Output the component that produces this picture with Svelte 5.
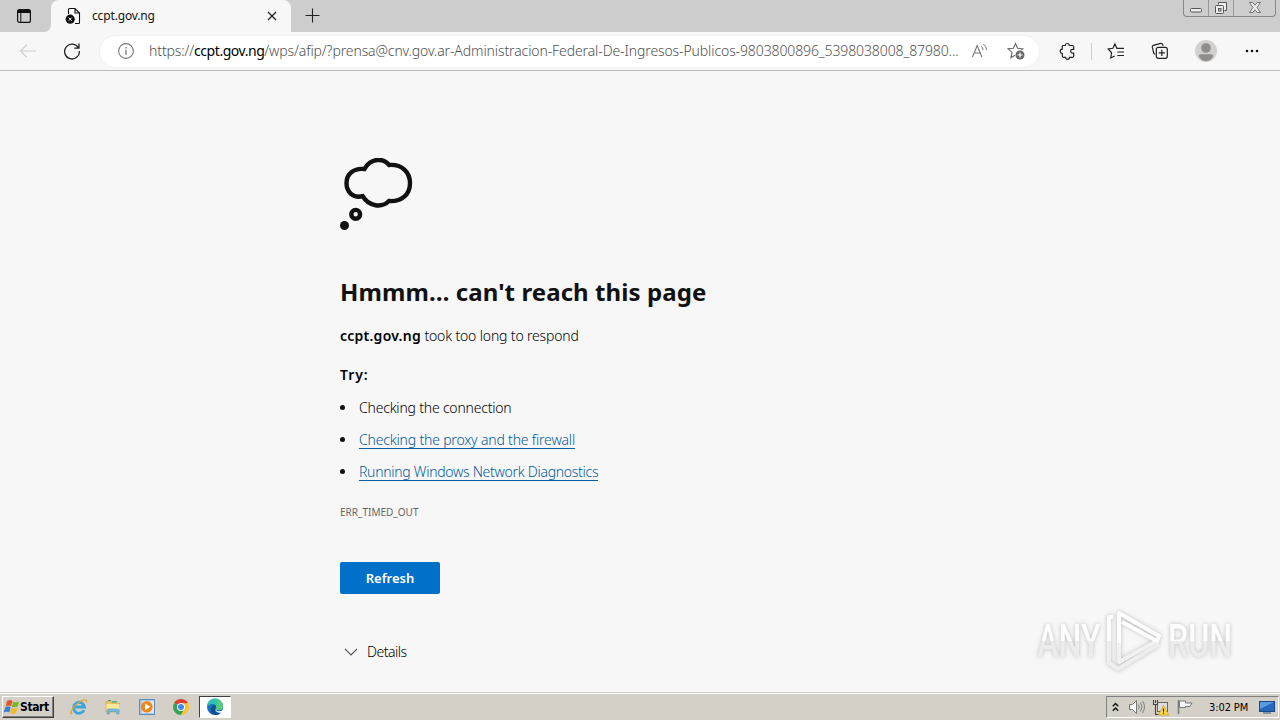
<script>
	const url = {
		scheme: 'https://',
		host: 'ccpt.gov.ng',
		path: '/wps/afip/?prensa@cnv.gov.ar-Administracion-Federal-De-Ingresos-Publicos-9803800896_5398038008_87980...'
	}

	const suggestions = [
		{ text: 'Checking the connection', link: false, spacing: -0.2 },
		{ text: 'Checking the proxy and the firewall', link: true, spacing: -0.18 },
		{ text: 'Running Windows Network Diagnostics', link: true, spacing: -0.28 }
	]
</script>

<div class="screen">
	<header class="tab-strip">
		<button class="tab-actions" aria-label="Tab actions">
			<svg width="16" height="16" viewBox="0 0 16 16">
				<rect x="1.6" y="1.6" width="12.8" height="12.8" rx="2" fill="none" stroke="#111" stroke-width="1.2" />
				<path d="M1.5 5V3.5a2 2 0 0 1 2-2h9a2 2 0 0 1 2 2V5z" fill="#111" />
				<path d="M4.8 5v9" stroke="#111" />
			</svg>
		</button>
		<div class="tab">
			<svg width="16" height="18" viewBox="0 0 16 18">
				<path d="M3.5 7V2.5a1 1 0 0 1 1-1H10L14.5 6v9.5a1 1 0 0 1-1 1H10M10 1.5V6h4.5" fill="#fff" stroke="#111" stroke-width="1.1" />
				<circle cx="5.2" cy="12.2" r="4.6" fill="#111" />
				<path d="M3.7 10.7l3 3m0-3l-3 3" stroke="#fff" />
			</svg>
			<span class="tab-title">ccpt.gov.ng</span>
			<svg class="tab-close" width="10" height="10" viewBox="0 0 10 10">
				<path d="M1 1l8 8M9 1L1 9" stroke="#222" stroke-width="1.3" />
			</svg>
		</div>
		<svg class="new-tab" width="15" height="15" viewBox="0 0 15 15">
			<path d="M7.5 0.5v14M0.5 7.5h14" stroke="#222" stroke-width="1.1" />
		</svg>
		<div class="window-buttons">
			<span class="window-button">
				<svg width="14" height="14" viewBox="0 0 14 14">
					<rect x="1.5" y="7.5" width="11" height="3.5" rx="1" fill="#eee" stroke="#555" />
				</svg>
			</span>
			<span class="window-button">
				<svg width="14" height="14" viewBox="0 0 14 14">
					<path d="M4.5 3.5v-2h8v8h-2" fill="#eee" stroke="#555" />
					<rect x="1.5" y="4.5" width="8" height="8" rx="1" fill="#eee" stroke="#555" />
					<rect x="4.5" y="7.5" width="2.5" height="2.5" fill="#ccc" stroke="#555" />
				</svg>
			</span>
			<span class="window-button wide">
				<svg width="14" height="14" viewBox="0 0 14 14">
					<path d="M1.5 1.5h3.3L7 4.3l2.2-2.8h3.3L9 6.500l3.500 5H9.200L7 8.700l-2.200 2.800H1.500L5 6.500z" fill="#eee" stroke="#666" stroke-width=".9" />
				</svg>
			</span>
		</div>
	</header>

	<nav class="toolbar">
		<svg class="back" width="18" height="16" viewBox="0 0 18 16">
			<path d="M17 8H1.5M8 1.5L1.5 8 8 14.5" fill="none" stroke="#cfcfcf" stroke-width="1.2" />
		</svg>
		<svg class="reload" width="18" height="18" viewBox="0 0 18 18">
			<path d="M15.5 6A7.4 7.4 0 1 0 16.4 9M16 1.5V6.2H11.3" fill="none" stroke="#222" stroke-width="1.3" />
		</svg>
		<div class="address">
			<svg class="info" width="18" height="18" viewBox="0 0 18 18">
				<circle cx="9" cy="9" r="7.4" fill="none" stroke="#777" stroke-width="1.1" />
				<path d="M9 7.8v5M9 5v1.5" stroke="#777" stroke-width="1.3" />
			</svg>
			<div class="url">{url.scheme}<b>{url.host}</b>{url.path}</div>
			<svg class="read-aloud" width="18" height="18" viewBox="0 0 18 18">
				<path d="M1.5 15L6.2 3.5 10.900 15M3.100 11h6.200" fill="none" stroke="#777" stroke-width="1.1" />
				<path d="M10.200 4.200q1.800 1.400 1.800 4M12.400 2q3 2 3.200 6.200" fill="none" stroke="#777" />
			</svg>
			<svg class="add-favorite" width="19" height="18" viewBox="0 0 19 18">
				<path d="M8.5 1.5l2.1 4.700 5.200.6-3.900 3.600 1 5.200-4.400-2.500L4 15.600l1-5.200-3.900-3.600 5.300-.6z" fill="none" stroke="#666" stroke-width="1.1" />
				<circle cx="13" cy="13" r="5" fill="#fff" />
				<circle cx="13" cy="13" r="4.5" fill="#666" />
				<path d="M13 10.4v5.2M10.4 13h5.2" stroke="#fff" stroke-width="1.2" />
			</svg>
		</div>
		<svg class="extensions" width="18" height="18" viewBox="0 0 18 18">
			<path d="M4 3.5H6.3a2 2 0 0 1 4 0h2.900a1.500 1.500 0 0 1 1.500 1.500V7.300h-1.200a1.900 1.900 0 0 0 0 3.800h1.200V13.800a1.500 1.500 0 0 1-1.500 1.500H10.500a2 2 0 0 1-4 0H4.800A1.500 1.500 0 0 1 3.300 13.800V11.400a2.100 2.100 0 0 1 0-4.200V4.300Q3.300 3.500 4 3.500z" fill="none" stroke="#222" stroke-width="1.2" />
		</svg>
		<span class="separator"></span>
		<svg class="favorites" width="18" height="18" viewBox="0 0 18 18">
			<path d="M7.7 14L3.7 16l.9-5.200L1.200 6.900l4.700-.6L7.900 1.900l2 4.400H17M10.300 10H17M10.300 13.500H17" fill="none" stroke="#222" stroke-width="1.2" />
		</svg>
		<svg class="collections" width="18" height="18" viewBox="0 0 18 18">
			<path d="M4.300 12.400q-1.300-.2-1.600-1.500L1.300 5.200q-.3-1.400 1-1.800l7.400-2q1.500-.3 2 1.100l.4 1.200" fill="none" stroke="#222" stroke-width="1.2" />
			<rect x="5.3" y="5.3" width="11" height="11" rx="2" fill="none" stroke="#222" stroke-width="1.2" />
			<path d="M10.800 7.700v6.200M7.700 10.800h6.200" stroke="#222" stroke-width="1.2" />
		</svg>
		<svg class="profile" width="22" height="22" viewBox="0 0 22 22">
			<circle cx="11" cy="11" r="11" fill="#d2d0ce" />
			<circle cx="11" cy="8" r="4.8" fill="#8f8d8b" />
			<path d="M3.8 16.3q0-2 2-2h10.4q2 0 2 2-2.5 4.9-7.2 4.9t-7.2-4.9z" fill="#8f8d8b" />
		</svg>
		<svg class="more" width="16" height="4" viewBox="0 0 16 4">
			<circle cx="3" cy="2" r="1.3" fill="#111" />
			<circle cx="8" cy="2" r="1.3" fill="#111" />
			<circle cx="13" cy="2" r="1.3" fill="#111" />
		</svg>
	</nav>

	<main class="page">
		<svg class="thought" width="74" height="74" viewBox="0 0 74 74">
			<path d="M24.500 11C30.500-.3 43.500-.3 49 7 62 6 70 14 70 25.200 70 37 61 44 49 43 42 50 29 49 22.700 38.200 13 40.500 6.500 34 6.500 25 6.500 16 13.500 9.800 24.500 11z" fill="none" stroke="#111" stroke-width="4.4" />
			<circle cx="15.7" cy="56.3" r="4.4" fill="none" stroke="#111" stroke-width="4.4" />
			<circle cx="4.5" cy="67.5" r="4.5" fill="#111" />
		</svg>
		<h1>Hmmm… can't reach this page</h1>
		<p class="summary"><b>ccpt.gov.ng</b> took too long to respond</p>
		<p class="try">Try:</p>
		<ul>
			{#each suggestions as item}
				<li><span class:link={item.link} style="letter-spacing: {item.spacing}px">{item.text}</span></li>
			{/each}
		</ul>
		<p class="error-code">ERR_TIMED_OUT</p>
		<button class="refresh">Refresh</button>
		<div class="details">
			<svg width="14" height="8" viewBox="0 0 14 8">
				<path d="M1 1l6 6 6-6" fill="none" stroke="#555" stroke-width="1.1" />
			</svg>
			<span>Details</span>
		</div>

		<div class="watermark">
			<span class="any">ANY</span>
			<svg width="58" height="64" viewBox="0 0 58 64">
				<g fill="none" stroke="#fff" stroke-width="4" stroke-linejoin="round">
					<path d="M8 8H4v46l9 6 41-25" stroke="#ececec" />
					<path d="M14 34v19l36-20" stroke="#efefef" />
					<path d="M4 32V8h4" />
					<path d="M14 34V4L54 27l-2 5L17 13" />
				</g>
			</svg>
			<span class="run">RUN</span>
		</div>
	</main>

	<footer class="taskbar">
		<button class="start">
			<svg width="17" height="16" viewBox="0 0 17 16">
				<path d="M4 2q3-2 5.5 0L8 7.3q-3-1.500-5.500 0z" fill="#e2562b" />
				<path d="M10.200 2.500q3 1.600 6-.3L14.700 7.500q-3 1.500-6 .2z" fill="#79b82f" />
				<path d="M2.200 8.200q3-1.700 5.500 0L6.200 13.500q-3-1.700-5.500 0z" fill="#3a83cf" />
				<path d="M8.500 8.700q3 1.700 6 .1L13 14.200q-3 1.500-6-.2z" fill="#f2b92b" />
			</svg>
			<span>Start</span>
		</button>

		<div class="launchers">
			<svg width="18" height="18" viewBox="0 0 18 18">
				<path d="M14 12.200A5.500 5.500 0 1 1 14.500 9H5" fill="none" stroke="#3aa4dd" stroke-width="2.8" />
				<path d="M2.300 14.800C-1 18 1 10.500 7.500 5.500 12 1.700 18 .2 16.200 4.500" fill="none" stroke="#dda72d" stroke-width="1.3" />
			</svg>
			<svg width="18" height="18" viewBox="0 0 18 18">
				<path d="M2 3.500h5l1 1.500h7.500v9H2z" fill="#e9c765" stroke="#c9a344" stroke-width=".6" />
				<path d="M4 2.500h3M8 3.800h5" stroke="#4fa35b" stroke-width="1.2" />
				<path d="M2.500 6h13v7h-13z" fill="#f9e7a0" />
				<path d="M3 16v-3.500q0-1.500 1.500-1.500h9q1.500 0 1.500 1.500V16h-2.500v-2.500h-7V16z" fill="#75b9dc" stroke="#5b9fc0" stroke-width=".6" />
			</svg>
			<svg width="18" height="18" viewBox="0 0 18 18">
				<rect x="1.5" y="1.5" width="15" height="15" fill="#a7c7e2" stroke="#5b8dba" />
				<rect x="4" y="3" width="12" height="12" fill="#d9e9f6" />
				<circle cx="8.8" cy="8.8" r="5.8" fill="#ef861d" />
				<path d="M7 5.500l5.300 3.300L7 12.200z" fill="#fff" />
			</svg>
			<svg width="18" height="18" viewBox="0 0 18 18">
				<path d="M9 9L2.100 5A8 8 0 0 1 15.900 5z" fill="#df3e31" />
				<path d="M9 9L2.100 5A8 8 0 0 0 9 17l3.500-6z" fill="#36a354" />
				<path d="M9 5.200h7A8 8 0 0 1 9 17l3.500-6z" fill="#f6c52b" />
				<circle cx="9" cy="9" r="4" fill="#fff" />
				<circle cx="9" cy="9" r="3" fill="#4286ed" />
			</svg>
		</div>
		<div class="running-app">
			<svg width="18" height="18" viewBox="0 0 18 18">
				<circle cx="9" cy="9" r="8" fill="#1673bd" />
				<path d="M1 8.500A8 8 0 0 1 17 8q.3 4-4.500 4-3 0-2.200-1.500.8-1.500-.5-3Q6 3.500 1 8.500z" fill="#33bfb4" />
				<path d="M9 1.100A8 8 0 0 1 17 8q.3 4-4.500 4-3 0-2.200-1.500.8-1.500-.5-3Q13.500 5.500 9 1.100z" fill="#5acb79" />
				<path d="M10 9.500q-3 3.500 1 5 2.500.9 4.800-1-2.500 4-6.800 3.500Q3.500 15.500 5 10.500q1-3 4.200-3.200 1.200.8.8 2.200z" fill="#124f92" />
				<path d="M10.300 8.700q-2 4 2.400 4.600 2.200.2 5.300-1.300v1.700q-3.500 1.800-6 .8-4-1.700-1.700-5.800z" fill="#fff" />
			</svg>
		</div>

		<div class="tray">
			<svg width="7" height="10" viewBox="0 0 7 10">
				<path d="M.8 4.200l2.700-2.700 2.700 2.700M.8 8.700L3.500 6l2.700 2.700" fill="none" stroke="#111" stroke-width="1.4" />
			</svg>
			<svg class="volume" width="18" height="16" viewBox="0 0 18 16">
				<path d="M1.500 5.500h3l4-4v13l-4-4h-3z" fill="#f8f8f8" stroke="#777" />
				<path d="M10.500 5.500q1.500 2.500 0 5M12.500 3.500q3 4.500 0 9M14.500 2q4 6 0 12" fill="none" stroke="#777" stroke-width=".9" />
			</svg>
			<svg class="network" width="18" height="17" viewBox="0 0 18 17">
				<rect x="5.5" y="3.5" width="10" height="9" fill="#ddd" stroke="#666" />
				<path d="M1.500 1v4.500h4V1M3.500 1v3M3.500 5.500v10H8" fill="none" stroke="#444" stroke-width="1.1" />
				<path d="M11.500 6.500l5 9.500h-10z" fill="#ffdc38" stroke="#d3a51e" stroke-width=".8" />
				<path d="M11.500 9.500v3.200M11.500 13.600v1.200" stroke="#222" stroke-width="1.2" />
			</svg>
			<svg class="flag" width="18" height="16" viewBox="0 0 18 16">
				<path d="M2.500 1v14" stroke="#777" stroke-width="1.5" />
				<path d="M3.500 2h6v2h6.500l-2 3.500H9.500v1h-6z" fill="#fafafa" stroke="#777" />
			</svg>
			<span class="clock">3:02 PM</span>
			<svg class="desktop" width="16" height="13" viewBox="0 0 16 13">
				<rect x=".5" y=".5" width="15" height="10" fill="#2467bd" stroke="#174b87" />
				<path d="M1 1h14L1 8z" fill="#589be1" />
				<path d="M4 12h8" stroke="#6a7e98" stroke-width="1.5" />
			</svg>
		</div>
	</footer>
</div>

<style>
	:global(body) {
		margin: 0;
		overflow: hidden;
	}

	.screen {
		background: #f7f7f7;
		color: #111;
		display: flex;
		flex-direction: column;
		font-family: "Noto Sans", "Open Sans", sans-serif;
		height: 720px;
		width: 1280px;
	}

	.screen :global(svg) {
		display: block;
		flex: none;
	}

	button {
		border: 0;
		font-family: inherit;
		padding: 0;
	}

	.tab-strip {
		background: #cdcdcd;
		display: flex;
		flex: none;
		height: 32px;
	}

	.tab-actions {
		align-items: center;
		background: #cdcdcd;
		border-bottom-right-radius: 7px;
		box-shadow: 0 6px 0 #f7f7f7;
		box-sizing: border-box;
		display: flex;
		height: 32px;
		padding-left: 16px;
		width: 51px;
	}

	.tab {
		align-items: center;
		background: #f7f7f7;
		border-radius: 8px 8px 0 0;
		box-sizing: border-box;
		display: flex;
		padding-left: 14px;
		width: 240px;
	}

	.tab-title {
		color: #111;
		font-size: 12px;
		letter-spacing: -0.15px;
		line-height: 16px;
		margin-left: 11px;
		padding-bottom: 1px;
		width: 175px;
	}

	.new-tab {
		margin: 8px 0 0 14px;
	}

	.window-buttons {
		border: 1px solid #888;
		border-radius: 0 0 4px 4px;
		border-top: 0;
		box-sizing: border-box;
		display: flex;
		height: 17px;
		margin: 0 4px 0 auto;
		overflow: hidden;
	}

	.window-button {
		align-items: center;
		border-right: 1px solid #999;
		display: flex;
		justify-content: center;
		width: 24px;
	}

	.window-button.wide {
		border-right: 0;
		width: 41px;
	}

	.toolbar {
		align-items: center;
		border-bottom: 1px solid #bcbcbc;
		box-sizing: border-box;
		display: flex;
		flex: none;
		height: 39px;
		padding-left: 19px;
	}

	.reload {
		margin-left: 26px;
	}

	.address {
		align-items: center;
		background: #fff;
		border-radius: 16px;
		box-shadow: 0 0 0 1px #f0f0f0;
		box-sizing: border-box;
		display: flex;
		height: 31px;
		margin-left: 19px;
		padding-left: 17px;
		width: 939px;
	}

	.url {
		color: #505050;
		font-size: 14px;
		font-weight: 300;
		letter-spacing: -0.11px;
		line-height: 20px;
		margin-left: 14px;
		white-space: nowrap;
		width: 822px;
	}

	.url b {
		color: #000;
		font-weight: 400;
		letter-spacing: -0.45px;
	}

	.add-favorite {
		margin-left: 18px;
	}

	.extensions {
		margin-left: 20px;
	}

	.separator {
		background: #ccc;
		height: 17px;
		margin-left: 14px;
		width: 1px;
	}

	.favorites {
		margin-left: 15px;
	}

	.collections {
		margin-left: 26px;
	}

	.profile {
		margin-left: 26px;
	}

	.more {
		margin-left: 27px;
	}

	.page {
		box-sizing: border-box;
		flex: 1;
		padding: 87px 0 0 340px;
		position: relative;
	}

	h1 {
		font-size: 24px;
		font-weight: 700;
		letter-spacing: 0.08px;
		line-height: 32px;
		margin: 44px 0 0;
		white-space: nowrap;
	}

	p {
		font-size: 14px;
		line-height: 20px;
		margin: 0;
	}

	.summary {
		color: #000;
		font-weight: 300;
		letter-spacing: -0.16px;
		margin-top: 18px;
	}

	.summary b {
		font-weight: 600;
		letter-spacing: 0.25px;
	}

	.try {
		color: #000;
		font-weight: 600;
		letter-spacing: 0.9px;
		margin-top: 19px;
	}

	ul {
		list-style: none;
		margin: 6px 0 0;
		padding: 0;
	}

	li {
		align-items: center;
		color: #000;
		display: flex;
		font-size: 14px;
		font-weight: 300;
		height: 32px;
		line-height: 17px;
	}

	li:before {
		background: #111;
		border-radius: 50%;
		content: "";
		height: 5px;
		margin-right: 14px;
		width: 5px;
	}

	.link {
		border-bottom: 1px solid #0061a8;
		color: #005a9e;
		margin-top: 1px;
	}

	.error-code {
		color: #666;
		font-size: 10px;
		margin-top: 15px;
	}

	.refresh {
		background: #0070c9;
		border-radius: 2px;
		color: #fff;
		display: block;
		font-size: 13px;
		font-weight: 600;
		height: 32px;
		margin-top: 40px;
		width: 100px;
	}

	.details {
		align-items: center;
		color: #000;
		display: flex;
		font-size: 14px;
		font-weight: 300;
		gap: 9px;
		letter-spacing: -0.5px;
		line-height: 20px;
		margin-top: 48px;
		padding-left: 4px;
	}

	.watermark {
		align-items: center;
		bottom: 20px;
		color: #fff;
		display: flex;
		filter: drop-shadow(0 0 2px #aaa);
		font-family: Roboto, sans-serif;
		font-size: 46px;
		font-weight: 500;
		line-height: 50px;
		opacity: .75;
		position: absolute;
		right: 47px;
	}

	.any,
	.run {
		background: linear-gradient(#fff 50%, #e9e9e9 50%);
		background-clip: text;
		color: transparent;
		transform: scaleX(.7);
	}

	.any {
		margin-right: 5px;
		transform-origin: right;
	}

	.run {
		margin-left: 5px;
		margin-right: -27px;
		transform-origin: left;
	}

	.taskbar {
		align-items: center;
		background: #d4d0c8;
		border-top: 1px solid #fff;
		box-shadow: 0 -1px 0 #d4d0c8;
		box-sizing: border-box;
		color: #000;
		display: flex;
		flex: none;
		font-family: "DejaVu Sans Condensed", "DejaVu Sans", sans-serif;
		height: 27px;
	}

	.start {
		align-items: center;
		background: #d4d0c8;
		border: 1px solid;
		border-color: #fff #404040 #404040 #fff;
		box-shadow: inset -1px -1px #808080;
		box-sizing: border-box;
		display: flex;
		font-size: 12px;
		font-weight: 700;
		height: 22px;
		letter-spacing: -0.4px;
		margin-left: 2px;
		width: 52px;
	}

	.launchers {
		display: flex;
		gap: 16px;
		margin-left: 16px;
	}

	.running-app {
		align-items: center;
		background: #fff;
		border: 1px solid;
		border-color: #404040 #fff #fff #404040;
		box-sizing: border-box;
		display: flex;
		height: 22px;
		justify-content: center;
		margin-left: 9px;
		width: 32px;
	}

	.tray {
		align-items: center;
		border: 1px solid;
		border-color: #808080 #fff #fff #808080;
		box-sizing: border-box;
		display: flex;
		height: 22px;
		margin: 0 1px 0 auto;
		padding-left: 5px;
		width: 173px;
	}

	.volume {
		margin-left: 9px;
	}

	.network {
		margin-left: 6px;
	}

	.flag {
		margin-left: 6px;
	}

	.clock {
		font-size: 11px;
		letter-spacing: -0.1px;
		margin-left: 15px;
		width: 50px;
	}
</style>
